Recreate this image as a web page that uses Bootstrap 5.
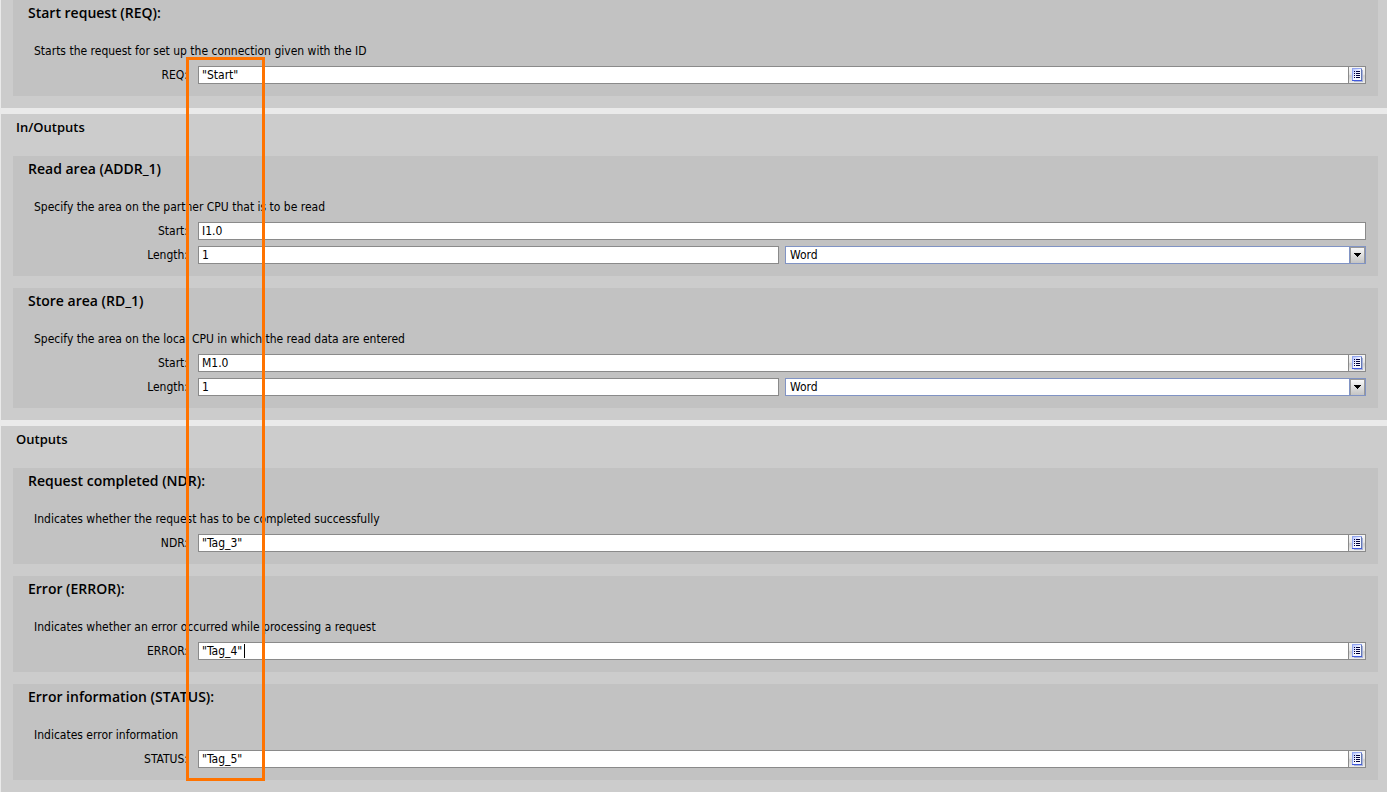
<!DOCTYPE html>
<html lang="en">
<head>
<meta charset="utf-8">
<meta name="viewport" content="width=device-width, initial-scale=1">
<title>Block parameters</title>
<link href="https://cdn.jsdelivr.net/npm/bootstrap@5.3.0/dist/css/bootstrap.min.css" rel="stylesheet">
<style>
  body { font: 12px/18px "DejaVu Sans Condensed", "Open Sans", sans-serif; color: #000; background: #eaeaea; }
  .param-page { gap: 6px; padding-left: 1px; min-height: 100vh; }
  .param-section { background: #ccc; padding: 0 9px 12px 12px; }
  .section-title, .group-title { font-family: "Open Sans", sans-serif; font-size: 14px; line-height: 18px; font-weight: 600; margin: 0; }
  .section-title { font-size: 13px; padding: 4px 3px 20px; }
  .group-list { gap: 12px; }
  .param-group { background: #c2c2c2; padding: 4px 12px 12px 15px; }
  .group-note { margin: 0; padding: 20px 0 6px 6px; }
  .field-list { gap: 6px; }
  .field-row { gap: 10px; }
  .field-label { width: 160px; text-align: right; }
  .field-pair { gap: 6px; }
  .field-box { height: 18px; flex: 1 1 0; min-width: 0; background: #fff; border: 1px solid #8a8a8a; }
  .field-box.is-choice { border-color: #8093c4; }
  .field-entry { border: 0; border-radius: 0; outline: 0; background: transparent; color: #000; font: inherit; line-height: 16px; padding: 0 3px; min-width: 0; appearance: none; }
  select.field-entry { padding: 0 4px; }
  .pick-button { width: 17px; border: 0; border-left: 1px solid #8a8a8a; padding: 0; background: linear-gradient(#f6f6f6, #e8e8e8 45%, #cfcfcf 55%, #ececec); }
  .drop-arrow { top: 0; right: 0; pointer-events: none; }
  .pick-button svg, .drop-arrow { display: block; }
  .text-caret { left: 45px; top: 1px; width: 1px; height: 14px; background: #000; }
  .highlight-frame { left: 186px; top: 57px; bottom: 11px; width: 79px; border: 3px solid #ff7300; pointer-events: none; }
</style>
</head>
<body>
<svg class="position-absolute" width="0" height="0" aria-hidden="true">
  <defs>
    <linearGradient id="sheet" x1="0" y1="0" x2="1" y2="1"><stop offset="0" stop-color="#a9baff"/><stop offset=".5" stop-color="#f4f6ff"/><stop offset="1" stop-color="#fff"/></linearGradient>
    <linearGradient id="key" x1="0" y1="0" x2="0" y2="1"><stop offset="0" stop-color="#f8f8f8"/><stop offset="1" stop-color="#c4c4c4"/></linearGradient>
  </defs>
  <symbol id="list-icon" viewBox="0 0 16 16" shape-rendering="crispEdges">
    <path fill="#a9b3d8" d="M5 14h9v1H5zM13 3h1v12h-1z"/>
    <path fill="url(#sheet)" d="M3 1h10v13H3z"/>
    <path fill="#93a5ee" d="M3 1h10v1H3zM3 1h1v13H3z"/>
    <path fill="#6478b4" d="M12 2h1v12h-1z"/>
    <path fill="#4059dc" d="M3 13h10v1H3z"/>
    <path fill="#00003c" d="M5 4h1v1H5zM7 4h4v1H7zM5 6h1v1H5zM7 6h4v1H7zM5 8h1v1H5zM7 8h4v1H7zM5 10h1v1H5zM7 10h4v1H7z"/>
  </symbol>
  <symbol id="arrow-icon" viewBox="0 0 16 16" shape-rendering="crispEdges">
    <path fill="#8093c4" d="M0 0h1v16H0z"/>
    <path fill="#999" d="M1 0h15v16H1z"/>
    <path fill="url(#key)" d="M2 1h13v15H2z"/>
    <path fill="#000" d="M5 6h7v1H5zM6 7h5v1H6zM7 8h3v1H7zM8 9h1v1H8z"/>
  </symbol>
</svg>

<main class="param-page d-flex flex-column position-relative">
  <section class="param-section">
    <div class="group-list d-flex flex-column">
      <div class="param-group">
        <h3 class="group-title">Start request (REQ):</h3>
        <p class="group-note">Starts the request for set up the connection given with the ID</p>
        <div class="field-row d-flex">
          <label class="field-label" for="req">REQ:</label>
          <div class="field-box d-flex"><input class="field-entry w-100" id="req" type="text" value="&quot;Start&quot;"><button class="pick-button flex-shrink-0" type="button" aria-label="Choose tag"><svg width="16" height="16"><use href="#list-icon"/></svg></button></div>
        </div>
      </div>
    </div>
  </section>

  <section class="param-section">
    <h2 class="section-title">In/Outputs</h2>
    <div class="group-list d-flex flex-column">
      <div class="param-group">
        <h3 class="group-title">Read area (ADDR_1)</h3>
        <p class="group-note">Specify the area on the partner CPU that is to be read</p>
        <div class="field-list d-flex flex-column">
          <div class="field-row d-flex">
            <label class="field-label" for="read-start">Start:</label>
            <div class="field-box d-flex"><input class="field-entry w-100" id="read-start" type="text" value="I1.0"></div>
          </div>
          <div class="field-row d-flex">
            <label class="field-label" for="read-length">Length:</label>
            <div class="field-pair d-flex flex-grow-1">
              <div class="field-box d-flex"><input class="field-entry w-100" id="read-length" type="text" value="1"></div>
              <div class="field-box is-choice d-flex position-relative"><select class="field-entry w-100" aria-label="Read length unit"><option>Word</option></select><svg class="drop-arrow position-absolute" width="16" height="16"><use href="#arrow-icon"/></svg></div>
            </div>
          </div>
        </div>
      </div>
      <div class="param-group">
        <h3 class="group-title">Store area (RD_1)</h3>
        <p class="group-note">Specify the area on the local CPU in which the read data are entered</p>
        <div class="field-list d-flex flex-column">
          <div class="field-row d-flex">
            <label class="field-label" for="store-start">Start:</label>
            <div class="field-box d-flex"><input class="field-entry w-100" id="store-start" type="text" value="M1.0"><button class="pick-button flex-shrink-0" type="button" aria-label="Choose tag"><svg width="16" height="16"><use href="#list-icon"/></svg></button></div>
          </div>
          <div class="field-row d-flex">
            <label class="field-label" for="store-length">Length:</label>
            <div class="field-pair d-flex flex-grow-1">
              <div class="field-box d-flex"><input class="field-entry w-100" id="store-length" type="text" value="1"></div>
              <div class="field-box is-choice d-flex position-relative"><select class="field-entry w-100" aria-label="Store length unit"><option>Word</option></select><svg class="drop-arrow position-absolute" width="16" height="16"><use href="#arrow-icon"/></svg></div>
            </div>
          </div>
        </div>
      </div>
    </div>
  </section>

  <section class="param-section flex-grow-1">
    <h2 class="section-title">Outputs</h2>
    <div class="group-list d-flex flex-column">
      <div class="param-group">
        <h3 class="group-title">Request completed (NDR):</h3>
        <p class="group-note">Indicates whether the request has to be completed successfully</p>
        <div class="field-row d-flex">
          <label class="field-label" for="ndr">NDR:</label>
          <div class="field-box d-flex"><input class="field-entry w-100" id="ndr" type="text" value="&quot;Tag_3&quot;"><button class="pick-button flex-shrink-0" type="button" aria-label="Choose tag"><svg width="16" height="16"><use href="#list-icon"/></svg></button></div>
        </div>
      </div>
      <div class="param-group">
        <h3 class="group-title">Error (ERROR):</h3>
        <p class="group-note">Indicates whether an error occurred while processing a request</p>
        <div class="field-row d-flex">
          <label class="field-label" for="error">ERROR:</label>
          <div class="field-box d-flex position-relative"><input class="field-entry w-100" id="error" type="text" value="&quot;Tag_4&quot;"><span class="text-caret position-absolute"></span><button class="pick-button flex-shrink-0" type="button" aria-label="Choose tag"><svg width="16" height="16"><use href="#list-icon"/></svg></button></div>
        </div>
      </div>
      <div class="param-group">
        <h3 class="group-title">Error information (STATUS):</h3>
        <p class="group-note">Indicates error information</p>
        <div class="field-row d-flex">
          <label class="field-label" for="status">STATUS:</label>
          <div class="field-box d-flex"><input class="field-entry w-100" id="status" type="text" value="&quot;Tag_5&quot;"><button class="pick-button flex-shrink-0" type="button" aria-label="Choose tag"><svg width="16" height="16"><use href="#list-icon"/></svg></button></div>
        </div>
      </div>
    </div>
  </section>
  <div class="highlight-frame position-absolute"></div>
</main>
<script src="https://cdn.jsdelivr.net/npm/bootstrap@5.3.0/dist/js/bootstrap.bundle.min.js"></script>
</body>
</html>
